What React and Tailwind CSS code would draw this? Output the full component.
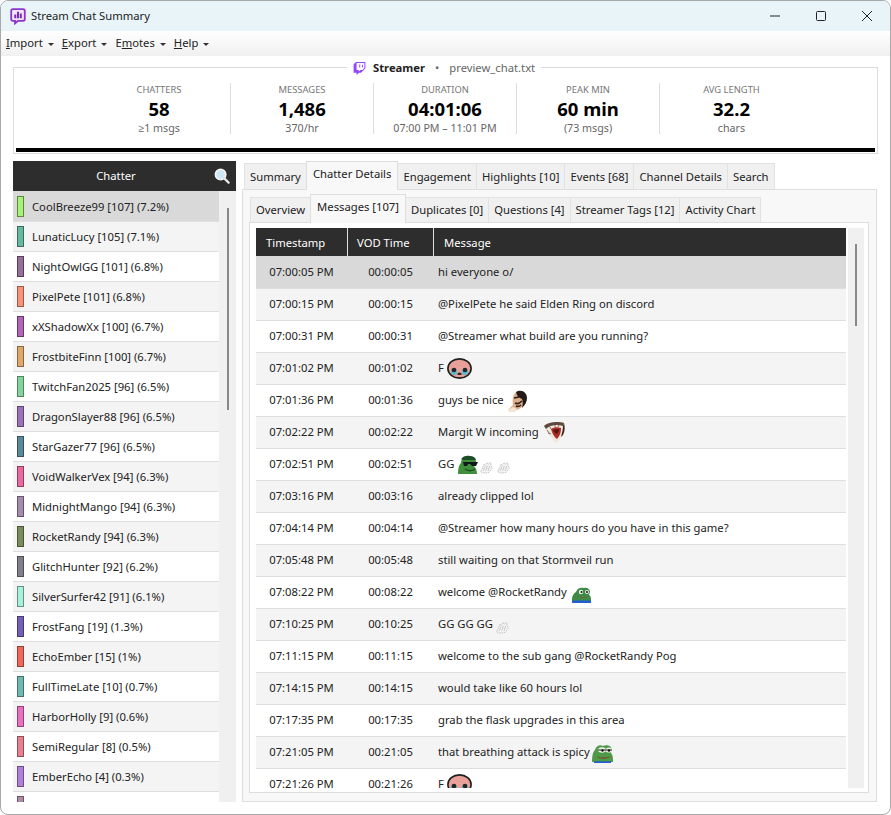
import React from "react";
import { FaTwitch } from "react-icons/fa";

const chatters = [
  ["CoolBreeze99 [107] (7.2%)", "bg-[#a8f07a]", "border-[#5c8a3c]"],
  ["LunaticLucy [105] (7.1%)", "bg-[#66b8a0]", "border-[#3a6b5c]"],
  ["NightOwlGG [101] (6.8%)", "bg-[#96709a]", "border-[#553d58]"],
  ["PixelPete [101] (6.8%)", "bg-[#f5947a]", "border-[#9a5a48]"],
  ["xXShadowXx [100] (6.7%)", "bg-[#b065b8]", "border-[#663768]"],
  ["FrostbiteFinn [100] (6.7%)", "bg-[#dca86c]", "border-[#8a683f]"],
  ["TwitchFan2025 [96] (6.5%)", "bg-[#82d49a]", "border-[#4e845e]"],
  ["DragonSlayer88 [96] (6.5%)", "bg-[#9a72b8]", "border-[#5e4570]"],
  ["StarGazer77 [96] (6.5%)", "bg-[#5a8a98]", "border-[#35535c]"],
  ["VoidWalkerVex [94] (6.3%)", "bg-[#e86aa0]", "border-[#8e3f60]"],
  ["MidnightMango [94] (6.3%)", "bg-[#a48cae]", "border-[#64546a]"],
  ["RocketRandy [94] (6.3%)", "bg-[#7a8c5c]", "border-[#4a5537]"],
  ["GlitchHunter [92] (6.2%)", "bg-[#80808a]", "border-[#4e4e54]"],
  ["SilverSurfer42 [91] (6.1%)", "bg-[#a8f0dc]", "border-[#659085]"],
  ["FrostFang [19] (1.3%)", "bg-[#7460b8]", "border-[#463a70]"],
  ["EchoEmber [15] (1%)", "bg-[#f0685c]", "border-[#923f38]"],
  ["FullTimeLate [10] (0.7%)", "bg-[#70b8b4]", "border-[#43706d]"],
  ["HarborHolly [9] (0.6%)", "bg-[#e870c0]", "border-[#8e4475]"],
  ["SemiRegular [8] (0.5%)", "bg-[#e88090]", "border-[#8e4e58]"],
  ["EmberEcho [4] (0.3%)", "bg-[#b080d8]", "border-[#6b4e84]"],
  ["QuietQuill [3] (0.2%)", "bg-[#b08aa8]", "border-[#6b5466]"],
];

const Sad = () => (
  <svg width="25" height="21" viewBox="0 0 25 21" className="shrink-0">
    <ellipse cx="12.5" cy="10.5" rx="11.6" ry="9.6" fill="#e9a098" stroke="#1f1f1f" strokeWidth="1.6" />
    <path d="M4 12c2-2 5-2 6 0v4c-2 2-5 1-6-1z" fill="#58bccb" />
    <path d="M15 12c1-2 4-2 6 0v3c-1 2-4 3-6 1z" fill="#58bccb" />
    <circle cx="7" cy="12" r="2.3" fill="#252525" /><circle cx="18" cy="12" r="2.3" fill="#252525" />
    <path d="M10.5 15.5q2-1.8 4 0v1.5h-4z" fill="#3a2020" />
  </svg>
);
const Man = () => (
  <svg width="21" height="22" viewBox="0 0 21 22" className="shrink-0">
    <path d="M11 1c5-1 8 3 8 8-1 5-3 8-7 10l-4 2-7-1 5-5C5 9 6 3 11 1z" fill="#dcae8c" />
    <path d="M9 2c5-3 11 0 11 6 0 4-2 7-5 10 1-4 1-7 0-9-3-1-5-3-6-7z" fill="#241b17" />
    <path d="M7 8l5-1M8 13c2 1 5 0 7-2M9 16c2 1 4 0 5-1" stroke="#2f211a" strokeWidth="1.7" fill="none" />
    <path d="M1 20l5-3 4 2-2 3H2z" fill="#f4e6d6" />
  </svg>
);
const Beast = () => (
  <svg width="21" height="21" viewBox="0 0 21 21" className="ml-[2px] shrink-0">
    <path d="M0 4C4 0 14-1 20 1c1 4 1 8-1 12-2 3-4 6-7 8-2-1-3-3-4-5C5 13 2 9 0 4z" fill="#f0e8dc" />
    <path d="M0 4C4 0 14-1 20 1l-1 3C13 2 6 3 2 7z" fill="#5d4a3d" />
    <path d="M20 1c1 4 1 8-1 12l-2 2c1-4 2-8 2-11z" fill="#33261f" />
    <path d="M7 7c3-2 7-2 10-1 0 4-1 8-4 11-3-2-5-6-6-10z" fill="#ab2b25" />
    <path d="M9 8c2-1 4-1 6-1 0 2-1 4-2 5-2-1-3-2-4-4z" fill="#5a1512" />
    <path d="M3 8l2 3M6 5l1 2M11 3v2M15 3l-1 2M4 11l3 1" stroke="#7b6554" strokeWidth="0.9" />
  </svg>
);
const PepeGlasses = () => (
  <svg width="21" height="20" viewBox="0 0 21 20" className="shrink-0">
    <path d="M1 19c0-6 1-9 3-11 0-5 5-7 8-6 4-1 7 1 7 5l-2 4c2 2 3 5 3 8z" fill="#3f8f3c" />
    <path d="M4 4c2-3 6-4 9-3 3 0 5 1 6 4H6z" fill="#1d4d27" />
    <path d="M6 7h15l-2 4h-4l-2-2h-2l-1 2H7z" fill="#10181a" />
    <path d="M8 14c3 2 7 2 10 0" stroke="#1d4a20" strokeWidth="1.4" fill="none" />
  </svg>
);
const Clap = ({ ml }) => (
  <svg width="13" height="13" viewBox="0 0 16 16" className={`shrink-0 translate-y-[3px] ${ml || ""}`}>
    <path d="M1 13l4-9 1 2 3-4 1 2 3-2 1 4 1 3-4 5-5 1-4-1z" fill="#f4f4f4" stroke="#b8b8b8" strokeWidth="1" strokeDasharray="2 1" />
    <path d="M6 7l-2 5M9 6l-2 6M12 6l-2 6" stroke="#bdbdbd" strokeWidth="1" />
  </svg>
);
const PeepoBlue = () => (
  <svg width="20" height="17" viewBox="0 0 20 17" className="ml-[1px] shrink-0 translate-y-[2px]">
    <path d="M1 15c0-5 1-7 4-9 1-4 5-5 8-4 3-1 6 1 6 4l-1 3c2 1 2 3 2 6z" fill="#3f8a45" />
    <circle cx="10" cy="6" r="2.2" fill="#eef3e8" /><circle cx="16" cy="6" r="2" fill="#eef3e8" />
    <circle cx="10.5" cy="6" r="1" fill="#111" /><circle cx="16" cy="6" r="1" fill="#111" />
    <path d="M8 10c3 2 6 2 9 0-1 2-7 3-9 0z" fill="#b0352c" />
    <path d="M1 14.5h19V17H1z" fill="#1f5fd0" />
  </svg>
);
const PepeSmile = () => (
  <svg width="21" height="20" viewBox="0 0 21 20" className="-ml-[1px] shrink-0">
    <path d="M0 19c0-7 1-10 3-12 1-4 5-6 8-4 4-2 9 0 9 4l-1 3c2 2 2 5 2 9z" fill="#4e9a48" />
    <ellipse cx="10" cy="7" rx="4" ry="2.8" fill="#eef2e4" /><ellipse cx="17" cy="7" rx="3.4" ry="2.6" fill="#eef2e4" />
    <path d="M6 7h8M14 7h6" stroke="#222" strokeWidth="1" />
    <circle cx="10.5" cy="7.5" r="1.2" fill="#111" /><circle cx="17" cy="7.5" r="1.2" fill="#111" />
    <path d="M4 13c4 2 11 2 15 0-2 3-11 4-15 0z" fill="#8c3b2a" />
    <path d="M2 18.3h17V20H2z" fill="#1f5fd0" />
  </svg>
);

const messages = [
  ["07:00:05 PM", "00:00:05", "hi everyone o/"],
  ["07:00:15 PM", "00:00:15", "@PixelPete he said Elden Ring on discord"],
  ["07:00:31 PM", "00:00:31", "@Streamer what build are you running?"],
  ["07:01:02 PM", "00:01:02", "F", [<Sad key="a" />]],
  ["07:01:36 PM", "00:01:36", "guys be nice", [<Man key="a" />]],
  ["07:02:22 PM", "00:02:22", "Margit W incoming", [<Beast key="a" />]],
  ["07:02:51 PM", "00:02:51", "GG", [<PepeGlasses key="a" />, <Clap key="b" ml="-ml-[1px]" />, <Clap key="c" ml="ml-[1px]" />]],
  ["07:03:16 PM", "00:03:16", "already clipped lol"],
  ["07:04:14 PM", "00:04:14", "@Streamer how many hours do you have in this game?"],
  ["07:05:48 PM", "00:05:48", "still waiting on that Stormveil run"],
  ["07:08:22 PM", "00:08:22", "welcome @RocketRandy", [<PeepoBlue key="a" />]],
  ["07:10:25 PM", "00:10:25", "GG GG GG", [<Clap key="a" />]],
  ["07:11:15 PM", "00:11:15", "welcome to the sub gang @RocketRandy Pog"],
  ["07:14:15 PM", "00:14:15", "would take like 60 hours lol"],
  ["07:17:35 PM", "00:17:35", "grab the flask upgrades in this area"],
  ["07:21:05 PM", "00:21:05", "that breathing attack is spicy", [<PepeSmile key="a" />]],
  ["07:21:26 PM", "00:21:26", "F", [<Sad key="a" />]],
];

const stats = [
  ["CHATTERS", "58", "≥1 msgs"],
  ["MESSAGES", "1,486", "370/hr"],
  ["DURATION", "04:01:06", "07:00 PM – 11:01 PM"],
  ["PEAK MIN", "60 min", "(73 msgs)"],
  ["AVG LENGTH", "32.2", "chars"],
];

const Caret = () => (
  <span className="ml-[5px] inline-block h-0 w-0 border-x-[3px] border-t-[3px] border-x-transparent border-t-[#333] align-middle" />
);

const Tab = ({ children, active, sub }) =>
  active ? (
    <div className="relative z-10 -mb-px -ml-px flex h-[29px] items-center border border-b-0 border-[#dedede] bg-[#f8f8f8] px-[6px] pb-[4px]">
      {children}
    </div>
  ) : (
    <div className={`flex items-center border border-b-0 border-l-0 first:border-l border-[#e2e2e2] bg-[#f0f0f0] px-[5px] ${sub ? "h-[25px]" : "h-[26px] pt-[1px]"}`}>
      {children}
    </div>
  );

export default function App() {
  return (
    <div
      className="flex h-[815px] w-[891px] flex-col overflow-hidden rounded-[8px] border border-[#a9a9a9] bg-white text-[11.25px] text-[#222]"
      style={{ fontFamily: '"Noto Sans", "Open Sans", sans-serif' }}
    >
      {/* title bar */}
      <div className="flex h-[30px] shrink-0 items-center bg-[#e8f4f8] pl-[9px]">
        <svg width="16" height="17" viewBox="0 0 16 17" className="shrink-0">
          <path d="M3 1.2h10c1 0 1.8.8 1.8 1.8v8c0 1-.8 1.8-1.8 1.8H8l-3 2.6v-2.6H3c-1 0-1.8-.8-1.8-1.8V3c0-1 .8-1.8 1.8-1.8z" fill="#efe4f8" stroke="#8c35c8" strokeWidth="1.8" />
          <path d="M4.3 6.5h2v3.8h-2zM7 3.8h2v6.5H7zM9.8 5.5h2v4.8h-2z" fill="#7a28b8" />
        </svg>
        <span className="ml-[5px]">Stream Chat Summary</span>
        <div className="ml-auto flex items-center text-[#222]">
          <div className="flex h-[30px] w-[46px] items-center justify-center">
            <svg width="10" height="10" viewBox="0 0 10 10"><path d="M0 5h10" stroke="#222" strokeWidth="1" /></svg>
          </div>
          <div className="flex h-[30px] w-[46px] items-center justify-center">
            <svg width="10" height="10" viewBox="0 0 10 10"><rect x="0.5" y="0.5" width="9" height="9" rx="1" fill="none" stroke="#222" /></svg>
          </div>
          <div className="flex h-[30px] w-[46px] items-center justify-center">
            <svg width="10" height="10" viewBox="0 0 10 10"><path d="M0 0l10 10M10 0L0 10" stroke="#222" strokeWidth="1" /></svg>
          </div>
        </div>
      </div>

      {/* menu */}
      <div className="flex h-[25px] shrink-0 items-center gap-[8px] bg-gradient-to-b from-white to-[#f0f0f0] pl-[5px]">
        <span><u>I</u>mport<Caret /></span>
        <span><u>E</u>xport<Caret /></span>
        <span>E<u>m</u>otes<Caret /></span>
        <span><u>H</u>elp<Caret /></span>
      </div>

      {/* body */}
      <div className="flex min-h-0 flex-1 flex-col px-[12px] pt-[11px]">
        {/* summary */}
        <div className="relative h-[87px] shrink-0 border border-[#dcdcdc] pt-[15px]">
          <div className="absolute -top-[9px] left-[333px] flex h-[18px] items-center bg-white px-[6px]">
            <FaTwitch className="text-[13px] text-[#9146ff]" />
            <span className="ml-[7px] font-bold">Streamer</span>
            <span className="mx-[10px] text-[#666]">•</span>
            <span className="text-[#666]">preview_chat.txt</span>
          </div>
          <div className="grid grid-cols-[repeat(5,143px)] justify-center">
            {stats.map(([l, v, s], i) => (
              <div key={l} className={`flex h-[51px] flex-col items-center ${i < 4 ? "border-r border-[#dedede]" : ""}`}>
                <span className="text-[9.4px] leading-[13px] text-[#777]">{l}</span>
                <span className="text-[18.5px] font-bold leading-[25px] text-black">{v}</span>
                <span className="text-[10.7px] leading-[14px] text-[#666]">{s}</span>
              </div>
            ))}
          </div>
          <div className="mx-[2px] mt-[14px] h-[4px] bg-black" />
        </div>

        {/* columns */}
        <div className="mt-[7px] flex min-h-0 flex-1 pb-[12px]">
          {/* chatter list */}
          <div className="flex w-[223px] shrink-0 flex-col overflow-hidden">
            <div className="relative flex h-[30px] shrink-0 items-center justify-center bg-[#2d2d2d] pr-[17px] pt-[1px] text-white">
              Chatter
              <svg width="16" height="16" viewBox="0 0 17 17" className="absolute right-[6px] top-[7px]">
                <circle cx="7" cy="7" r="5.5" fill="#cfe6f5" stroke="#f4f4f4" strokeWidth="1.8" />
                <path d="M11 11l4.5 4.5" stroke="#e8e8e8" strokeWidth="2.4" strokeLinecap="round" />
              </svg>
            </div>
            <div className="flex min-h-0 flex-1">
              <div className="h-full w-[206px] shrink-0 overflow-hidden">
                {chatters.map(([name, bg, border], i) => (
                  <div
                    key={name}
                    className={`flex items-center border-b border-[#dedede] pl-[4px] ${i === 0 ? "h-[31px] bg-[#d9d9d9]" : i % 2 ? "h-[30px] bg-[#f4f4f4]" : "h-[30px] bg-white"}`}
                  >
                    <span className={`h-[21px] w-[7px] shrink-0 border ${bg} ${border}`} />
                    <span className="ml-[8px] mt-[2px] whitespace-nowrap text-[#222]">{name}</span>
                  </div>
                ))}
              </div>
              <div className="flex w-[17px] shrink-0 justify-center bg-[#f0f0f0] pt-[17px]">
                <div className="h-[202px] w-[2px] bg-[#888]" />
              </div>
            </div>
          </div>

          {/* tabs */}
          <div className="ml-[6px] mr-[1px] flex min-w-0 flex-1 flex-col">
            <div className="flex h-[28px] shrink-0 items-end pl-[2px]">
              <Tab>Summary</Tab>
              <Tab active>Chatter Details</Tab>
              <Tab>Engagement</Tab>
              <Tab>Highlights [10]</Tab>
              <Tab>Events [68]</Tab>
              <Tab>Channel Details</Tab>
              <Tab>Search</Tab>
            </div>
            <div className="flex min-h-0 flex-1 flex-col border border-[#dedede] bg-[#f8f8f8] pl-[6px] pr-[7px] pt-[6px] pb-[8px]">
              <div className="flex h-[26px] shrink-0 items-end pl-[1px]">
                <Tab sub>Overview</Tab>
                <Tab sub active>Messages [107]</Tab>
                <Tab sub>Duplicates [0]</Tab>
                <Tab sub>Questions [4]</Tab>
                <Tab sub>Streamer Tags [12]</Tab>
                <Tab sub>Activity Chart</Tab>
              </div>
              <div className="flex min-h-0 flex-1 flex-col border border-[#dedede] bg-white pl-[6px] pr-[4px] pt-[5px] pb-[4px]">
                <div className="flex min-h-0 flex-1">
                  <div className="w-[590px] shrink-0 overflow-hidden">
                    <div className="flex h-[28px] items-center bg-[#2d2d2d] text-white">
                      <div className="flex h-full w-[92px] items-center border-r border-[#ddd] pl-[10px]"><span className="mt-[2px]">Timestamp</span></div>
                      <div className="flex h-full w-[86px] items-center border-r border-[#ddd] pl-[9px]"><span className="mt-[2px]">VOD Time</span></div>
                      <div className="mt-[2px] pl-[10px]">Message</div>
                    </div>
                    {messages.map(([t, v, m, e], i) => (
                      <div
                        key={t}
                        className={`flex items-center border-b border-[#dedede] ${i === 0 ? "h-[33px] bg-[#d9d9d9]" : i % 2 ? "h-[32px] bg-[#f4f4f4]" : "h-[32px] bg-white"}`}
                      >
                        <div className="w-[91px] text-center">{t}</div>
                        <div className="w-[87px] text-center">{v}</div>
                        <div className="flex items-center gap-[3px] pl-[4px] whitespace-nowrap">
                          <span>{m}</span>
                          {e}
                        </div>
                      </div>
                    ))}
                  </div>
                  <div className="ml-[2px] flex w-[16px] shrink-0 justify-center bg-[#f0f0f0] pt-[16px]">
                    <div className="h-[82px] w-[2px] bg-[#888]" />
                  </div>
                </div>
              </div>
            </div>
          </div>
        </div>
      </div>
    </div>
  );
}
